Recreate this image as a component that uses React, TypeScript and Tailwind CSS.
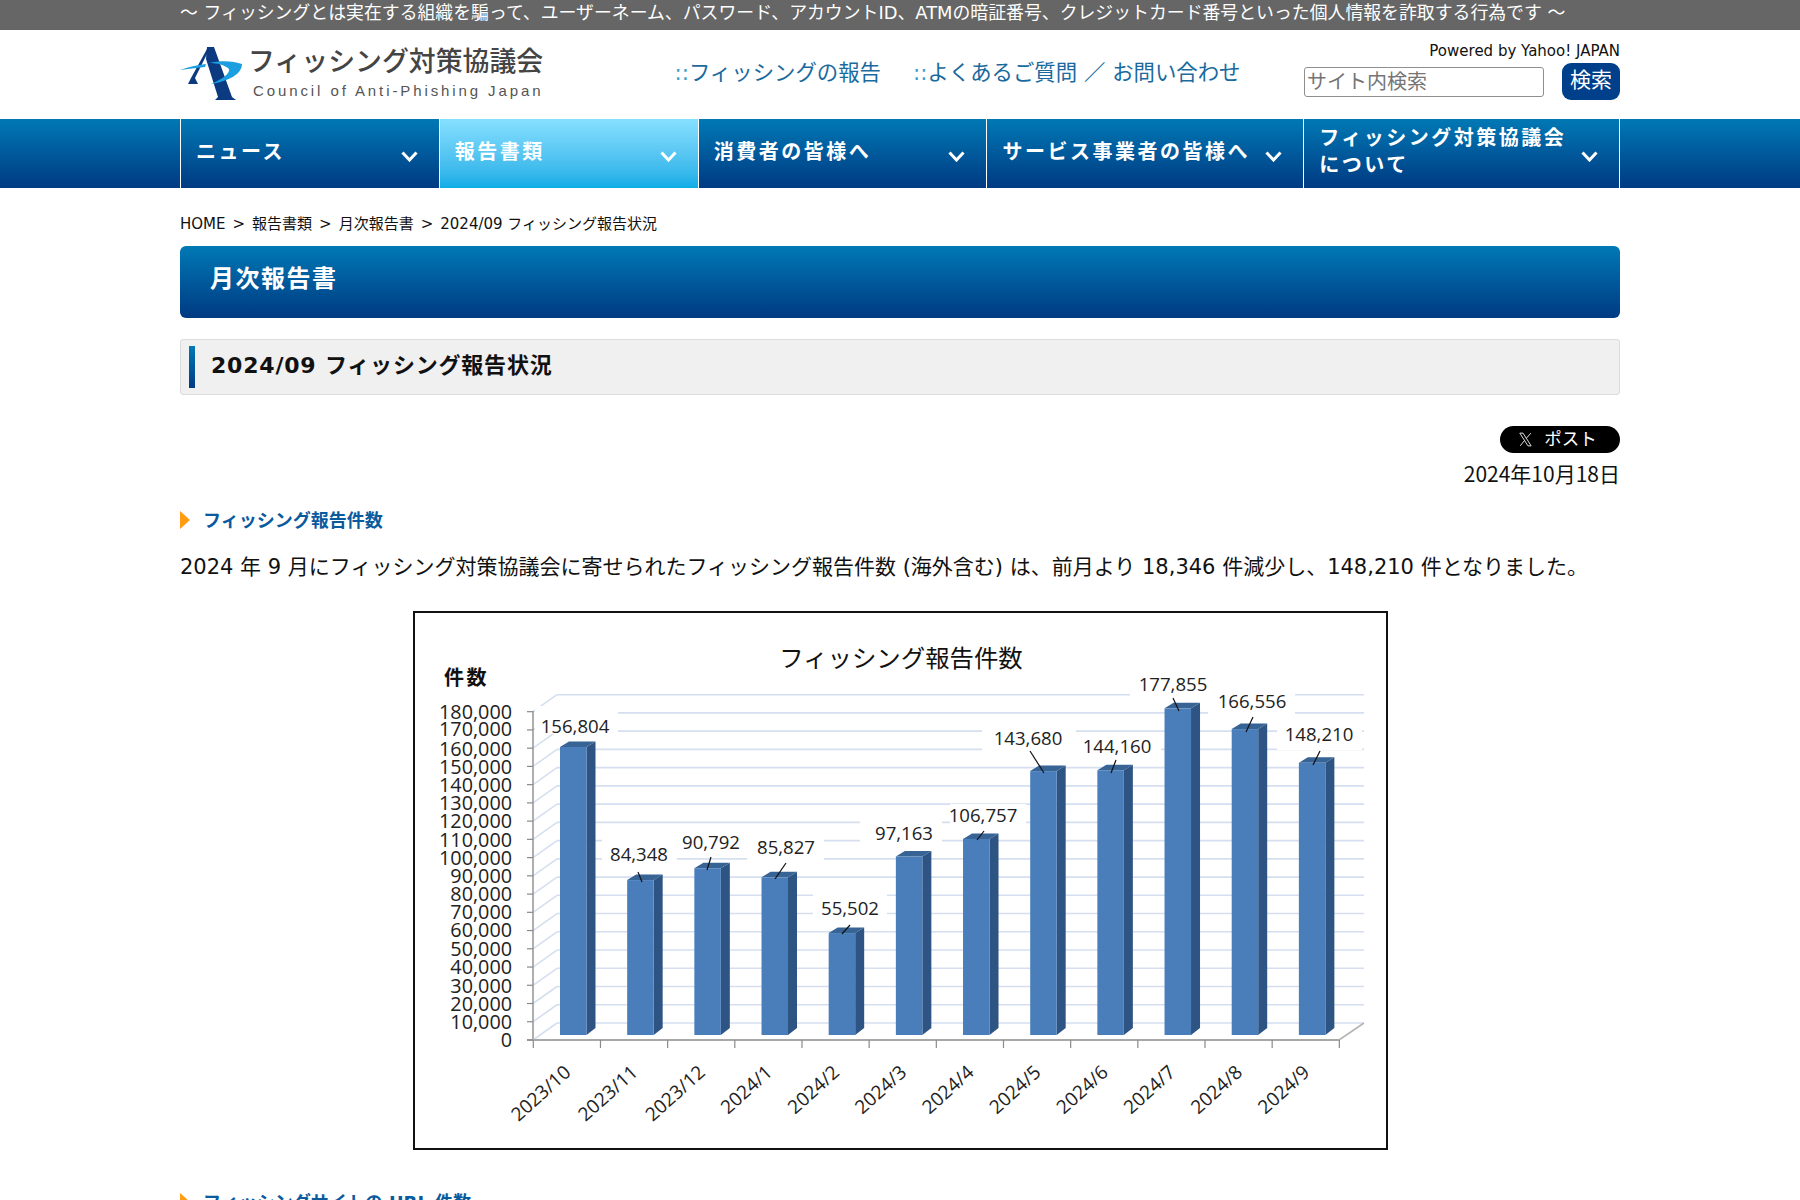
const FONT = "font-['DejaVu_Sans','Noto_Sans_CJK_JP',sans-serif]";

const NAV = [
  { label: ["ニュース"], width: "w-[259px]" },
  { label: ["報告書類"], width: "w-[259px]", active: true },
  { label: ["消費者の皆様へ"], width: "w-[289px]" },
  { label: ["サービス事業者の皆様へ"], width: "w-[317px]" },
  { label: ["フィッシング対策協議会", "について"], width: "w-[316px]" },
];

const CRUMBS = ["HOME", "報告書類", "月次報告書", "2024/09 フィッシング報告状況"];

const AXIS = [713, 730, 750, 768, 786, 804, 822, 841, 859, 877, 895, 913, 931, 950, 968, 987, 1005, 1023, 1041];

const BARS = [
  { name: "2023/10", value: 156804, label: [575, 727] },
  { name: "2023/11", value: 84348, label: [639, 855], line: [638, 872, 642, 882] },
  { name: "2023/12", value: 90792, label: [711, 843], line: [711, 857, 707, 870] },
  { name: "2024/1", value: 85827, label: [786, 848], line: [786, 863, 775, 879] },
  { name: "2024/2", value: 55502, label: [850, 909], line: [850, 925, 842, 934] },
  { name: "2024/3", value: 97163, label: [904, 834] },
  { name: "2024/4", value: 106757, label: [983, 816], line: [984, 831, 977, 840] },
  { name: "2024/5", value: 143680, label: [1028, 739], line: [1030, 751, 1044, 773] },
  { name: "2024/6", value: 144160, label: [1117, 747], line: [1116, 760, 1111, 773] },
  { name: "2024/7", value: 177855, label: [1173, 685], line: [1173, 698, 1179, 711] },
  { name: "2024/8", value: 166556, label: [1252, 702], line: [1253, 717, 1246, 732] },
  { name: "2024/9", value: 148210, label: [1319, 735], line: [1320, 751, 1313, 765] },
];

// white boxes behind the data labels, they cut the grid lines
const LABEL_BG = [
  [535, 706, 83, 28],
  [602, 836, 75, 34],
  [675, 830, 72, 24],
  [747, 834, 77, 28],
  [813, 894, 74, 28],
  [860, 812, 82, 36],
  [950, 804, 76, 26],
  [982, 724, 94, 28],
  [1076, 736, 85, 16],
  [1130, 670, 85, 28],
  [1208, 690, 87, 24],
  [1277, 722, 85, 28],
];

function Chart() {
  const grid = Array.from({ length: 19 }, (_, i) => 1040 - i * 18.24);
  return (
    <svg viewBox="415 613 971 535" className="w-full h-full block">
      {grid.map((y, i) => (
        <g key={i} stroke="#d6dff0" strokeWidth="1.6">
          <line x1="533" y1={y} x2="557" y2={y - 17} />
          <line x1="557" y1={y - 17} x2="1364" y2={y - 17} />
        </g>
      ))}
      {LABEL_BG.map(([x, y, w, h], i) => (
        <rect key={i} x={x} y={y} width={w} height={h} fill="#fff" />
      ))}
      <line x1="1339" y1="1040" x2="1364" y2="1023" stroke="#b5b5b5" strokeWidth="1.6" />
      <line x1="533" y1="711" x2="533" y2="1040" stroke="#9a9a9a" strokeWidth="1.6" />
      <line x1="527" y1="1040" x2="1339" y2="1040" stroke="#a8a8a8" strokeWidth="1.8" />
      {grid.map((y, i) => (
        <line key={i} x1="527" y1={y} x2="533" y2={y} stroke="#8a8a8a" strokeWidth="1.2" />
      ))}
      {Array.from({ length: 13 }, (_, i) => (
        <line key={i} x1={533.3 + i * 67.17} y1="1040" x2={533.3 + i * 67.17} y2="1048" stroke="#8a8a8a" strokeWidth="1.2" />
      ))}

      {BARS.map((b, i) => {
        const x = 560 + i * 67.17;
        const top = 1035 - b.value * 0.0018367;
        return (
          <g key={b.name}>
            <polygon points={`${x + 26.5},${top} ${x + 35.5},${top - 5.5} ${x + 35.5},1028 ${x + 26.5},1035`} fill="#2d5482" />
            <polygon points={`${x},${top} ${x + 9},${top - 5.5} ${x + 35.5},${top - 5.5} ${x + 26.5},${top}`} fill="#376395" />
            <rect x={x} y={top} width="26.5" height={1035 - top} fill="#4a7ebb" />
          </g>
        );
      })}

      {BARS.map((b) =>
        b.line ? (
          <line key={b.name} x1={b.line[0]} y1={b.line[1]} x2={b.line[2]} y2={b.line[3]} stroke="#111" strokeWidth="1.2" />
        ) : null,
      )}

      <g fontFamily="'Open Sans', 'Noto Sans', sans-serif" fill="#222">
        {AXIS.map((y, i) => (
          <text key={i} x="512" y={y + 6} textAnchor="end" fontSize="19.8">
            {(180000 - i * 10000).toLocaleString("en-US")}
          </text>
        ))}
        {BARS.map((b) => (
          <text key={b.name} x={b.label[0]} y={b.label[1] + 6} textAnchor="middle" fontSize="18.6">
            {b.value.toLocaleString("en-US")}
          </text>
        ))}
        {BARS.map((b, i) => {
          const x = 572 + i * 67.17;
          return (
            <text key={b.name} x={x} y="1074" textAnchor="end" fontSize="19" transform={`rotate(-42 ${x} 1074)`}>
              {b.name}
            </text>
          );
        })}
      </g>
      <g fontFamily="'Noto Sans CJK JP', sans-serif" fill="#111">
        <text x="901" y="667" textAnchor="middle" fontSize="24.4">
          フィッシング報告件数
        </text>
        <text x="444" y="685" fontSize="20" fontWeight="700" letterSpacing="2.5">
          件数
        </text>
      </g>
    </svg>
  );
}

function Logo() {
  return (
    <svg viewBox="180 46 64 57" className="w-[64px] h-[57px] shrink-0">
      <path d="M207 48h7l18 50 4 3h-21l3-3-12-38z" fill="#0b3a80" />
      <path d="M207 50l-16 29-3 6h10l-3-6 13-26z" fill="#0b3a80" />
      <path d="M180 71c8-3 17-5 26-6l-1 3c-9 1-17 2-25 3z" fill="#1b9fe0" />
      <path d="M209 64c12-3 25-2 33 1 0 10-13 17-31 20 11-5 19-10 18-15-4-4-12-6-20-6z" fill="#1b9fe0" />
    </svg>
  );
}

function Triangle() {
  return <span className="block w-0 h-0 border-y-[9px] border-y-transparent border-l-[10px] border-l-[#ff9c12]" />;
}

export default function App() {
  return (
    <div className={`${FONT} h-[1200px] overflow-hidden bg-white text-[#111]`}>
      <div className="h-[30px] bg-[#666666] text-white text-[17.87px] leading-[26px] pl-[180px] whitespace-nowrap">
        ～ フィッシングとは実在する組織を騙って、ユーザーネーム、パスワード、アカウントID、ATMの暗証番号、クレジットカード番号といった個人情報を詐取する行為です ～
      </div>

      <header className="h-[89px] w-[1440px] mx-auto flex">
        <div className="flex pt-[15px]">
          <Logo />
          <div className="ml-[4px]">
            <div className="text-[26.9px] leading-[34px] text-[#444] font-medium whitespace-nowrap">フィッシング対策協議会</div>
            <div className="font-['Liberation_Sans',sans-serif] text-[15px] leading-[18px] tracking-[2.9px] text-[#555] mt-[3px] ml-[5px] whitespace-nowrap">
              Council of Anti-Phishing Japan
            </div>
          </div>
        </div>
        <div className="flex text-[21.4px] leading-[30px] text-[#1a6a9e] pt-[28px] ml-[131px] whitespace-nowrap">
          <span className="text-[#3aa0d0]">::</span>
          <span>フィッシングの報告</span>
          <span className="text-[#3aa0d0] ml-[32px]">::</span>
          <span>よくあるご質問 ／ お問い合わせ</span>
        </div>
        <div className="ml-auto flex flex-col items-end pt-[11px]">
          <div className="text-[15px] leading-[20px] whitespace-nowrap">Powered by Yahoo! JAPAN</div>
          <div className="flex mt-[2px]">
            <input
              placeholder="サイト内検索"
              className="w-[240px] h-[30px] mt-[4px] border border-[#8f8f8f] rounded-[3px] px-[2px] text-[20px] outline-none placeholder:text-[#757575]"
            />
            <button className="w-[58px] h-[37px] ml-[18px] rounded-[9px] bg-[#003f8a] text-white text-[21px] leading-none pb-[2px]">検索</button>
          </div>
        </div>
      </header>

      <nav className="h-[69px] bg-gradient-to-b from-[#0079b5] to-[#003a82]">
        <ul className="w-[1440px] mx-auto h-full flex border-r border-white">
          {NAV.map((item) => (
            <li
              key={item.label[0]}
              className={`${item.width} h-full border-l border-white flex items-center justify-between pl-[15px] pr-[21px] text-white font-bold text-[20px] leading-[27px] tracking-[2.5px] ${
                item.active ? "bg-gradient-to-b from-[#86e0ff] to-[#08ade6]" : ""
              }`}
            >
              <div className="whitespace-nowrap -mt-[3px]">
                {item.label.map((line) => (
                  <div key={line}>{line}</div>
                ))}
              </div>
              <svg viewBox="0 0 17 11" className="w-[17px] h-[11px] shrink-0 mt-[5px]" fill="none" stroke="#fff" strokeWidth="3">
                <polyline points="1.5,1.5 8.5,9 15.5,1.5" />
              </svg>
            </li>
          ))}
        </ul>
      </nav>

      <main className="w-[1440px] mx-auto">
        <div className="h-[58px] pt-[24px] flex gap-[7px] text-[15px] leading-[24px] whitespace-nowrap">
          {CRUMBS.map((crumb, i) => (
            <div key={crumb} className="flex gap-[7px]">
              {i > 0 && <span>&gt;</span>}
              <span>{crumb}</span>
            </div>
          ))}
        </div>

        <h1 className="h-[72px] rounded-[6px] bg-gradient-to-b from-[#0079b5] to-[#003a82] text-white text-[24px] font-bold tracking-[1.5px] leading-[66px] pl-[30px]">
          月次報告書
        </h1>

        <div className="mt-[21px] h-[56px] bg-[#f0f0f0] border border-[#dddddd] rounded-[3px] flex items-center pl-[8px]">
          <span className="block w-[6px] h-[42px] bg-gradient-to-b from-[#0079b5] to-[#003a82]" />
          <h2 className="ml-[16px] text-[22px] leading-[30px] -mt-[3px] font-bold tracking-[0.8px]">2024/09 フィッシング報告状況</h2>
        </div>

        <div className="flex flex-col items-end">
          <a className="mt-[31px] w-[120px] h-[27px] rounded-full bg-black text-white flex items-center justify-center gap-[10px] pr-[6px] text-[17.5px] leading-none">
            <svg viewBox="0 0 24 24" className="w-[17px] h-[17px]" fill="none" stroke="#ddd" strokeWidth="1.4">
              <path d="M4 3h4.5l11.5 18h-4.5zM19.5 3L13 10.5M10.5 13.5L4.5 21" />
            </svg>
            ポスト
          </a>
          <div className="mt-[5px] font-['Noto_Sans_CJK_JP',sans-serif] text-[21px] leading-[30px]">2024年10月18日</div>
        </div>

        <div className="mt-[23px] flex items-center gap-[13px] h-[18px]">
          <Triangle />
          <h3 className="text-[18px] leading-none pt-[1px] font-bold text-[#0a5a9e]">フィッシング報告件数</h3>
        </div>

        <p className="mt-[22px] text-[21px] leading-[32px] whitespace-nowrap">
          2024 年 9 月にフィッシング対策協議会に寄せられたフィッシング報告件数 (海外含む) は、前月より 18,346 件減少し、148,210 件となりました。
        </p>

        <div className="mt-[28px] mx-auto w-[975px] h-[539px] border-2 border-[#111]">
          <Chart />
        </div>

        <div className="mt-[43px] flex items-center gap-[13px] h-[18px]">
          <Triangle />
          <h3 className="text-[18px] leading-none pt-[1px] font-bold text-[#0a5a9e] whitespace-nowrap">フィッシングサイトの URL 件数</h3>
        </div>
      </main>
    </div>
  );
}
